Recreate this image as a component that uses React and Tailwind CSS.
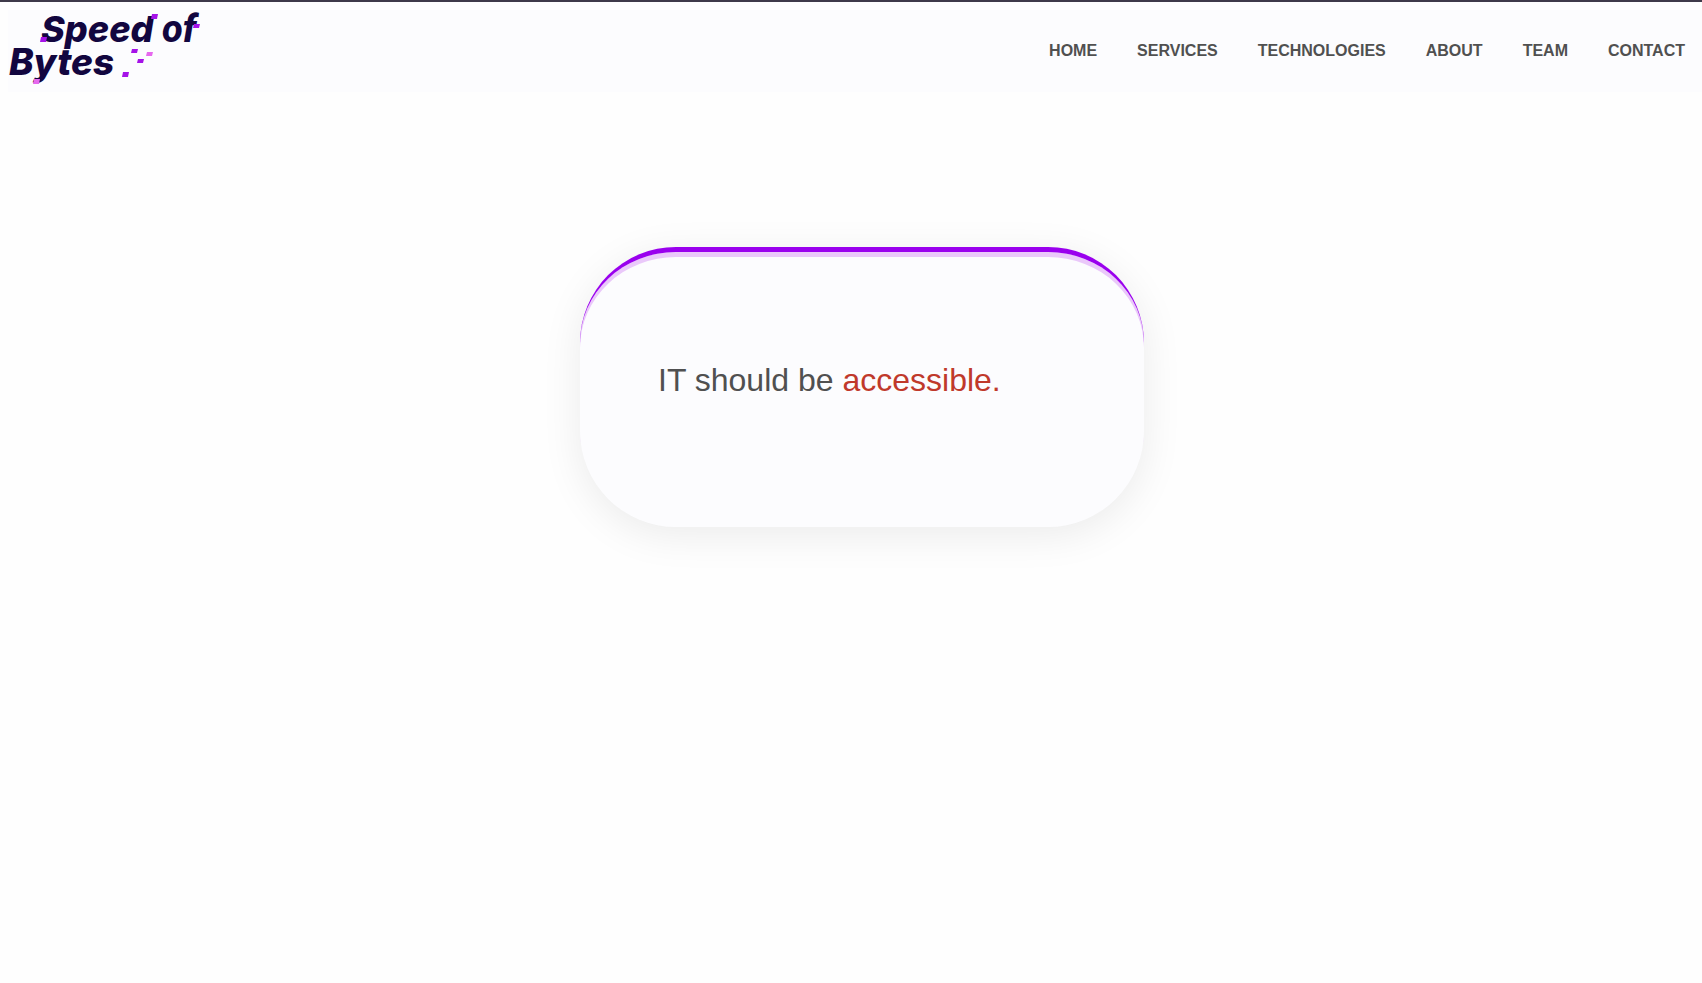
const links = ["Home", "Services", "Technologies", "About", "Team", "Contact"];

function Logo() {
  return (
    <svg
      viewBox="0 0 200 82"
      className="h-[82px] w-[200px] shrink-0 overflow-visible text-4xl font-extrabold italic"
      role="img"
      aria-label="Speed of Bytes"
    >
      <g fill="#12063f" className="font-['Inter',sans-serif]">
        <text x="33" y="32">Speed</text>
        <text x="154" y="32" className="font-['Roboto',sans-serif] text-[38px]">of</text>
        <text x="1" y="65" className="text-[37px]">Bytes</text>
      </g>
      <g fill="#a512e8">
        <path d="M33 27h6l-1 5h-6z" />
        <path d="M144 4h6l-1 5h-6z" />
        <path d="M186 14h6l-1 4h-6z" />
        <path d="M124 39h6l-1 4h-6z" />
        <path d="M130 49h6l-1 4h-6z" />
        <path d="M115 62h6l-1 5h-6z" />
      </g>
      <g fill="#e668ee">
        <path d="M139 42h6l-1 4h-6z" />
        <path d="M26 69h6l-1 5h-6z" />
      </g>
    </svg>
  );
}

export default function App() {
  return (
    <div className="min-h-screen border-t-2 border-[#3f3a4a] bg-[#fefefe] font-['Liberation_Sans',Arial,sans-serif] text-[#505050]">
      <header className="mt-2 ml-2 flex items-center justify-between bg-[#fcfcfe] pr-[17px]">
        <a href="#home">
          <Logo />
        </a>
        <nav aria-label="Main">
          <ul className="flex gap-10">
            {links.map((name) => (
              <li key={name}>
                <a href={"#" + name.toLowerCase()} className="text-base font-bold uppercase">
                  {name}
                </a>
              </li>
            ))}
          </ul>
        </nav>
      </header>
      <main className="flex justify-center pt-[155px] pl-[22px]">
        <section className="h-[280px] w-[564px] max-w-full rounded-[96px] border-t-[5px] border-[#9a00ee] bg-[#fcfcfe] px-[78px] pt-[108px] shadow-[0_8px_40px_rgba(0,0,0,0.08),inset_0_5px_0_#eac8fa]">
          <h1 className="text-[32px] leading-10">
            IT should be <span className="text-[#c0392b]">accessible.</span>
          </h1>
        </section>
      </main>
    </div>
  );
}
